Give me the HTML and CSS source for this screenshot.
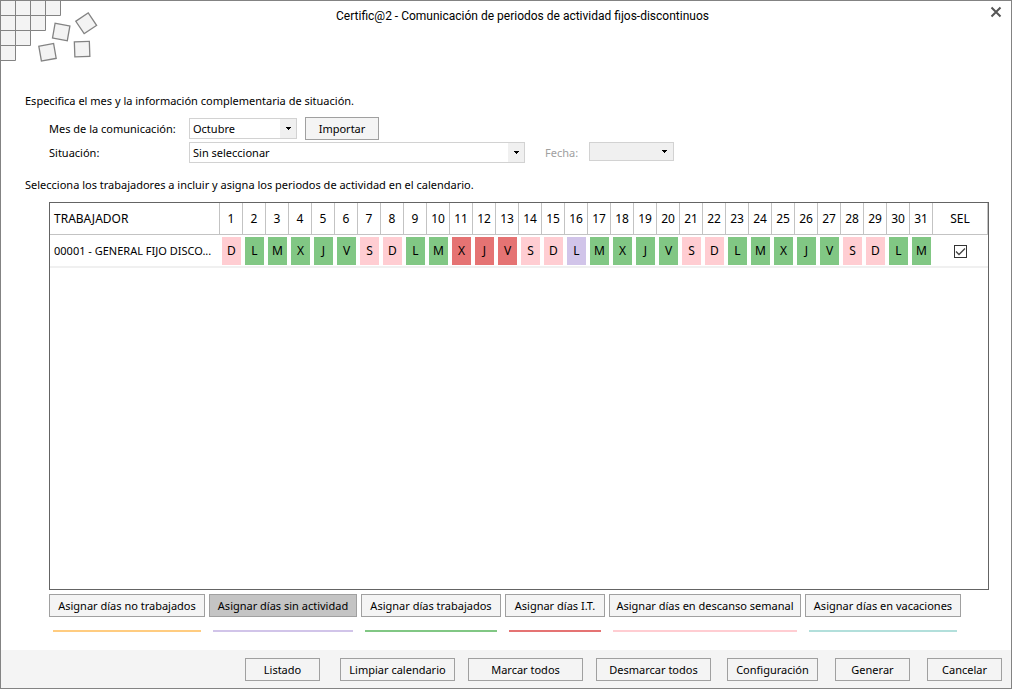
FILE: index.html
```html
<!DOCTYPE html>
<html lang="es">
<head>
<meta charset="utf-8">
<meta name="viewport" content="width=device-width, initial-scale=1">
<title>Certific@2</title>
<link rel="stylesheet" href="styles.css">
</head>
<body>
<div class="window">
  <header class="titlebar">
    <svg class="logo" width="100" height="64" viewBox="1 1 100 64" aria-hidden="true">
      <g fill="#f3f3f3" stroke="#838383">
        <path d="M.5 .5H60.500V15.500H45.500V30.500H30.500V45.500H15.500V60.500H.5Z"/>
        <path d="M.5 15.500H45.500M.5 30.500H30.500M.5 45.500H15.500M15.500 .5V45.500M30.500 .5V30.500M45.500 .5V15.500" fill="none"/>
        <rect x="-7.500" y="-7.500" width="15" height="15" transform="translate(86.200 23.300) rotate(-34)" stroke-width="1.300"/>
        <rect x="-7.500" y="-7.500" width="15" height="15" transform="translate(61.200 32) rotate(10)" stroke-width="1.300"/>
        <rect x="-7.500" y="-7.500" width="15" height="15" transform="translate(47.500 52.300) rotate(-10)" stroke-width="1.300"/>
        <rect x="-7.500" y="-7.500" width="15" height="15" transform="translate(82.100 49.100) rotate(-2)" stroke-width="1.300"/>
      </g>
    </svg>
    <h1 class="title">Certific@2 - Comunicación de periodos de actividad fijos-discontinuos</h1>
    <button class="close" type="button" aria-label="Cerrar">
      <svg width="12" height="12" viewBox="0 0 12 12" aria-hidden="true"><path d="M1.500 1.500L10.500 10.500M10.500 1.500L1.500 10.500" stroke="#555" stroke-width="2" fill="none"/></svg>
    </button>
  </header>

  <main class="content">
    <p class="hint">Especifica el mes y la información complementaria de situación.</p>
    <div class="form">
      <div class="field-row">
        <label class="label" for="mes">Mes de la comunicación:</label>
        <select class="select select-month" id="mes"><option>Octubre</option></select>
        <button class="btn btn-import" type="button">Importar</button>
      </div>
      <div class="field-row">
        <label class="label" for="situacion">Situación:</label>
        <select class="select select-status" id="situacion"><option>Sin seleccionar</option></select>
        <label class="label label-date" for="fecha">Fecha:</label>
        <select class="select select-date" id="fecha" disabled><option></option></select>
      </div>
    </div>
    <p class="hint hint-workers">Selecciona los trabajadores a incluir y asigna los periodos de actividad en el calendario.</p>

    <div class="frame">
      <table class="calendar">
        <colgroup><col class="col-name"><col class="col-day" span="31"><col></colgroup>
        <thead>
          <tr>
            <th class="name">TRABAJADOR</th>
            <th>1</th><th>2</th><th>3</th><th>4</th><th>5</th><th>6</th><th>7</th><th>8</th><th>9</th><th>10</th><th>11</th><th>12</th><th>13</th><th>14</th><th>15</th><th>16</th><th>17</th><th>18</th><th>19</th><th>20</th><th>21</th><th>22</th><th>23</th><th>24</th><th>25</th><th>26</th><th>27</th><th>28</th><th>29</th><th>30</th><th>31</th>
            <th>SEL</th>
          </tr>
        </thead>
        <tbody>
          <tr>
            <td class="name worker">00001 - GENERAL FIJO DISCO...</td>
            <td><span class="day rest">D</span></td>
            <td><span class="day work">L</span></td>
            <td><span class="day work">M</span></td>
            <td><span class="day work">X</span></td>
            <td><span class="day work">J</span></td>
            <td><span class="day work">V</span></td>
            <td><span class="day rest">S</span></td>
            <td><span class="day rest">D</span></td>
            <td><span class="day work">L</span></td>
            <td><span class="day work">M</span></td>
            <td><span class="day sick">X</span></td>
            <td><span class="day sick">J</span></td>
            <td><span class="day sick">V</span></td>
            <td><span class="day rest">S</span></td>
            <td><span class="day rest">D</span></td>
            <td><span class="day idle">L</span></td>
            <td><span class="day work">M</span></td>
            <td><span class="day work">X</span></td>
            <td><span class="day work">J</span></td>
            <td><span class="day work">V</span></td>
            <td><span class="day rest">S</span></td>
            <td><span class="day rest">D</span></td>
            <td><span class="day work">L</span></td>
            <td><span class="day work">M</span></td>
            <td><span class="day work">X</span></td>
            <td><span class="day work">J</span></td>
            <td><span class="day work">V</span></td>
            <td><span class="day rest">S</span></td>
            <td><span class="day rest">D</span></td>
            <td><span class="day work">L</span></td>
            <td><span class="day work">M</span></td>
            <td><input class="check" type="checkbox" aria-label="Seleccionar trabajador 00001" checked></td>
          </tr>
        </tbody>
      </table>
    </div>

    <div class="assign">
      <div class="assign-item off w-156"><button class="btn" type="button">Asignar días no trabajados</button></div>
      <div class="assign-item idle-line w-148"><button class="btn btn-active" type="button" aria-pressed="true">Asignar días sin actividad</button></div>
      <div class="assign-item work-line w-140"><button class="btn" type="button">Asignar días trabajados</button></div>
      <div class="assign-item sick-line w-100"><button class="btn" type="button">Asignar días I.T.</button></div>
      <div class="assign-item rest-line w-192"><button class="btn" type="button">Asignar días en descanso semanal</button></div>
      <div class="assign-item holiday-line w-156"><button class="btn" type="button">Asignar días en vacaciones</button></div>
    </div>
  </main>

  <footer class="footer">
    <button class="btn btn-small" type="button">Listado</button>
    <div class="group group-rows">
      <button class="btn btn-wide" type="button">Limpiar calendario</button>
      <button class="btn btn-wide" type="button">Marcar todos</button>
      <button class="btn btn-wide" type="button">Desmarcar todos</button>
    </div>
    <div class="group group-actions">
      <button class="btn btn-config" type="button">Configuración</button>
      <button class="btn btn-small" type="button">Generar</button>
      <button class="btn btn-small" type="button">Cancelar</button>
    </div>
  </footer>
</div>
</body>
</html>
```
FILE: styles.css
```css
* {
  box-sizing: border-box;
}

body {
  margin: 0;
  background: #fff;
  color: #000;
  font: 11px/16px "Noto Sans", "Open Sans", sans-serif;
}

.window {
  display: flex;
  flex-direction: column;
  min-height: 100vh;
  border: 1px solid #838383;
}

.titlebar {
  display: flex;
  align-items: flex-start;
}

.logo {
  flex: none;
  display: block;
}

.title {
  flex: 1;
  margin: 0;
  padding-top: 7px;
  font-family: Roboto, "Noto Sans", sans-serif;
  font-size: 12px;
  line-height: 16px;
  font-weight: 400;
  text-align: center;
}

.close {
  width: 67px;
  padding: 5px 9px 0 0;
  border: 0;
  background: none;
  text-align: right;
}

.close svg {
  display: inline-block;
  vertical-align: top;
}

.content {
  flex: 1;
  display: flex;
  flex-direction: column;
  padding: 28px 22px 18px 24px;
}

.hint {
  margin: 0;
}

.form {
  display: grid;
  gap: 2px;
  margin: 8px 0 14px 24px;
}

.field-row {
  display: flex;
  align-items: center;
}

.label {
  width: 140px;
}

.label-date {
  width: 44px;
  margin-left: 20px;
  color: #a0a0a0;
}

.select {
  height: 21px;
  padding: 0 20px 0 3px;
  border: 1px solid #d2d2d2;
  border-radius: 0;
  appearance: none;
  background:
    url("data:image/svg+xml,%3Csvg xmlns='http://www.w3.org/2000/svg' width='5' height='3'%3E%3Cpath d='M0 0h5v1h-1v1h-1v1h-1v-1h-1v-1h-1z'/%3E%3C/svg%3E") right 5px center no-repeat,
    linear-gradient(#f0f0f0, #f0f0f0) right / 16px 100% no-repeat,
    #fff;
  color: #000;
  font: inherit;
}

.select-month {
  width: 108px;
}

.select-status {
  width: 336px;
}

.select-date {
  width: 85px;
  height: 19px;
  align-self: flex-start;
  background-color: #f0f0f0;
  background-position: right 6px center, right;
  opacity: 1;
}

.btn {
  height: 23px;
  padding: 0;
  border: 1px solid #a0a0a0;
  background: #f4f4f4;
  color: #000;
  font: inherit;
  white-space: nowrap;
}

.btn-active {
  background: #c4c4c4;
}

.btn-import {
  width: 74px;
  margin-left: 8px;
}

.frame {
  flex: 1;
  margin: 9px 0 0 24px;
  border: 1px solid #646464;
}

.calendar {
  width: 100%;
  table-layout: fixed;
  border-collapse: separate;
  border-spacing: 0;
  font-size: 12px;
}

.col-name {
  width: 170px;
}

.col-day {
  width: 23px;
}

.calendar th {
  height: 32px;
  padding: 0;
  border-right: 1px solid #c3c3c3;
  border-bottom: 1px solid #c3c3c3;
  font-weight: 400;
  text-align: center;
}

.calendar td {
  height: 33px;
  padding: 2px 2px 1px;
  border-bottom: 2px solid #f0f0f0;
  text-align: center;
}

.calendar .name {
  padding-left: 4px;
  padding-right: 0;
  text-align: left;
  white-space: nowrap;
}

.calendar .worker {
  font-size: 11px;
}

.day {
  display: block;
  line-height: 28px;
}

.work {
  background: #81c784;
}

.rest {
  background: #ffcdd2;
}

.sick {
  background: #e57373;
}

.idle {
  background: #d1c4e9;
}

.check {
  display: block;
  width: 13px;
  height: 13px;
  margin: 0 auto;
  border: 1px solid #333;
  appearance: none;
  background: #fff;
}

.check:checked {
  background: url("data:image/svg+xml,%3Csvg xmlns='http://www.w3.org/2000/svg' width='11' height='11'%3E%3Cpath d='M1 5.500l3 3 6-6' fill='none' stroke='%23444' stroke-width='1.300'/%3E%3C/svg%3E") center no-repeat;
}

.assign {
  display: flex;
  gap: 4px;
  margin: 4px 0 0 24px;
}

.assign-item {
  display: flex;
  flex-direction: column;
  gap: 13px;
}

.assign-item::after {
  content: "";
  height: 2px;
  margin: 0 4px;
  background: #ffcc80;
}

.idle-line::after {
  background: #d1c4e9;
}

.work-line::after {
  background: #81c784;
}

.sick-line::after {
  background: #e57373;
}

.rest-line::after {
  background: #ffcdd2;
}

.holiday-line::after {
  background: #b2dfdb;
}

.w-100 {
  width: 100px;
}

.w-140 {
  width: 140px;
}

.w-148 {
  width: 148px;
}

.w-156 {
  width: 156px;
}

.w-192 {
  width: 192px;
}

.footer {
  display: flex;
  justify-content: flex-end;
  padding: 8px 9px 7px;
  background: #f4f4f4;
}

.group {
  display: flex;
}

.group-rows {
  gap: 13px;
  margin: 0 16px 0 20px;
}

.group-actions {
  gap: 17px;
}

.btn-small {
  width: 75px;
}

.btn-wide {
  width: 115px;
}

.btn-config {
  width: 91px;
}
```
